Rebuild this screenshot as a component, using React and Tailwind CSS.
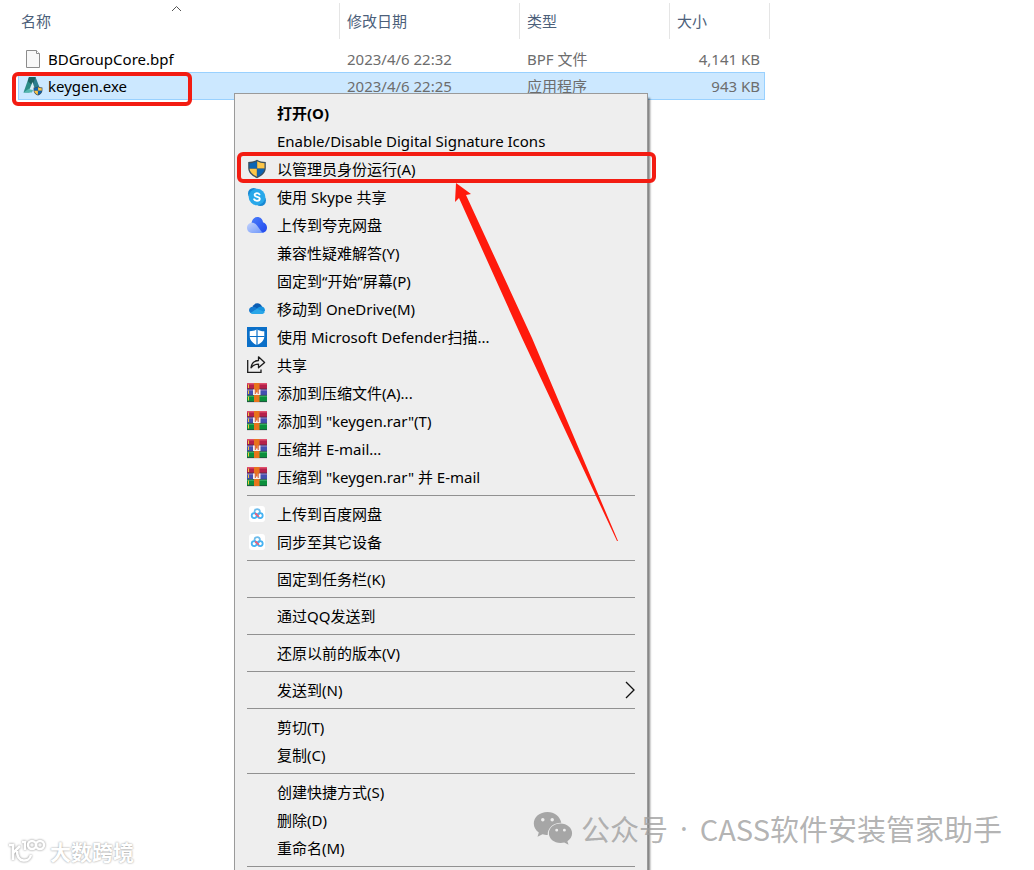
const FILES = [
  { name: 'BDGroupCore.bpf', date: '2023/4/6 22:32', type: 'BPF 文件', size: '4,141 KB', icon: PageIcon },
  { name: 'keygen.exe', date: '2023/4/6 22:25', type: '应用程序', size: '943 KB', icon: KeygenIcon, selected: true },
]

const MENU = [
  [
    { label: '打开(O)', bold: true },
    { label: 'Enable/Disable Digital Signature Icons' },
    { label: '以管理员身份运行(A)', icon: AdminShieldIcon },
    { label: '使用 Skype 共享', icon: SkypeIcon },
    { label: '上传到夸克网盘', icon: QuarkIcon },
    { label: '兼容性疑难解答(Y)' },
    { label: '固定到“开始”屏幕(P)' },
    { label: '移动到 OneDrive(M)', icon: OneDriveIcon },
    { label: '使用 Microsoft Defender扫描...', icon: DefenderIcon },
    { label: '共享', icon: ShareIcon },
    { label: '添加到压缩文件(A)...', icon: RarIcon },
    { label: '添加到 "keygen.rar"(T)', icon: RarIcon },
    { label: '压缩并 E-mail...', icon: RarIcon },
    { label: '压缩到 "keygen.rar" 并 E-mail', icon: RarIcon },
  ],
  [
    { label: '上传到百度网盘', icon: BaiduIcon },
    { label: '同步至其它设备', icon: BaiduIcon },
  ],
  [{ label: '固定到任务栏(K)' }],
  [{ label: '通过QQ发送到' }],
  [{ label: '还原以前的版本(V)' }],
  [{ label: '发送到(N)', submenu: true }],
  [{ label: '剪切(T)' }, { label: '复制(C)' }],
  [{ label: '创建快捷方式(S)' }, { label: '删除(D)' }, { label: '重命名(M)' }],
]

function PageIcon() {
  return (
    <svg width="20" height="20" viewBox="0 0 20 20" fill="none">
      <path d="M3.5 1.5h10l3 3v14h-13z" fill="#f8f8f8" stroke="#8c8c8c" />
      <path d="M13.5 1.5v3h3" stroke="#8c8c8c" fill="#fff" />
    </svg>
  )
}

function ShieldQuarters() {
  return (
    <>
      <path d="M10 0.8C7.600 2.300 4.500 3 1.200 3.100V9c0 4.600 3.800 8 8.800 10.200C15 17 18.800 13.600 18.800 9V3.100C15.500 3 12.400 2.300 10 .8z" fill="#3c4f5c" />
      <path d="M9.800 2.300C7.700 3.500 5.200 4.100 2.500 4.300v5.200h7.300z" fill="#0b64b4" />
      <path d="M10.200 2.300c2.100 1.200 4.600 1.800 7.300 2v5.200h-7.300z" fill="#fdc648" />
      <path d="M2.500 9.700h7.300v8C5.800 15.800 2.900 13 2.500 9.700z" fill="#fdc648" />
      <path d="M17.500 9.700h-7.300v8c4-1.900 6.900-4.700 7.300-8z" fill="#0b64b4" />
    </>
  )
}

function KeygenIcon() {
  return (
    <svg width="20" height="20" viewBox="0 0 20 20">
      <path d="M0.500 16.500 6 1h6.500L6.500 16.500z" fill="#2a8c86" />
      <path d="M6.500 1h6l6 15.500h-6z" fill="#2c7d8e" />
      <path d="M6 1 4.800 5.200 9.500 9.500 12.500 1z" fill="#1d6262" />
      <path d="M0.500 16.500 6 12.500l4 1.500-1 2.500z" fill="#55b8b0" />
      <path d="M9.500 6 6.500 13.500h5.500z" fill="#d9eef6" />
      <g transform="translate(10 10) scale(.5)"><ShieldQuarters /></g>
    </svg>
  )
}

function AdminShieldIcon() {
  return <svg width="20" height="20" viewBox="0 0 20 20"><ShieldQuarters /></svg>
}

function SkypeIcon() {
  return (
    <svg width="20" height="20" viewBox="0 0 20 20">
      <circle cx="6.500" cy="6.500" r="5.500" fill="#1787d2" />
      <circle cx="13.500" cy="13.500" r="5.500" fill="#1787d2" />
      <circle cx="10" cy="10" r="8.300" fill="#28a8ea" />
      <path d="M12.500 7.400C12 6.600 11.200 6.200 10 6.200c-1.400 0-2.400.7-2.400 1.700 0 2.600 5.200 1.200 5.200 3.900 0 1.200-1.200 2-2.800 2-1.300 0-2.300-.5-2.900-1.500" fill="none" stroke="#fff" strokeWidth="1.800" strokeLinecap="round" />
    </svg>
  )
}

function QuarkIcon() {
  return (
    <svg width="20" height="20" viewBox="0 0 20 20">
      <defs>
        <linearGradient id="quarkBack" x1="0" y1="0" x2="1" y2="1">
          <stop offset="0" stopColor="#4a7dfb" />
          <stop offset="1" stopColor="#2148ec" />
        </linearGradient>
        <linearGradient id="quarkFront" x1="0" y1="0" x2="1" y2="1">
          <stop offset="0" stopColor="#c3d2fb" />
          <stop offset="1" stopColor="#6c96fb" />
        </linearGradient>
      </defs>
      <path d="M4.500 8C5 4.500 7.200 2 10.300 2c3.200 0 5.300 2.200 5.700 5.200 2.400.8 4 2.900 4 5.300 0 3.200-2.300 5.500-5.500 5.500L4 13z" fill="url(#quarkBack)" />
      <path d="M0 12.800C0 9.900 2.200 7.700 5 7.700c2.400 0 3.700 1.200 5 2.800l3.500 4.800c.8 1.200 2 2.400 3.500 2.700H5c-2.900 0-5-2.300-5-5.200z" fill="url(#quarkFront)" />
    </svg>
  )
}

function OneDriveIcon() {
  return (
    <svg width="20" height="20" viewBox="0 0 20 20">
      <path d="M5 9.500C5.600 6.300 7.700 4.300 10.300 4.300c2.300 0 4.100 1.500 4.900 3.700L12 13z" fill="#0a5db4" />
      <path d="M6 14.500c-2.300 0-4-1.300-4-3.300 0-2.100 1.700-3.500 3.700-3.500 1.600 0 2.600.7 4 1.500L16 14z" fill="#1479d0" />
      <path d="M9.500 10c1.400-1.500 3.200-2.700 5.300-2.400 2 .3 3.200 1.900 3.200 3.800L16.500 14z" fill="#1793df" />
      <path d="M3.500 14 10 9.700l7.700 3.200c-.5 1.300-1.700 2.100-3.200 2.100H6c-1 0-1.800-.3-2.500-1z" fill="#29a6e8" />
    </svg>
  )
}

function DefenderIcon() {
  return (
    <svg width="20" height="20" viewBox="0 0 20 20">
      <path d="M0 0h20v20H0z" fill="#0a6fc8" />
      <path d="M10 2.200c2 1.400 4.500 2 7.300 2.100v4.900c0 4-3 6.900-7.300 8.900-4.300-2-7.300-4.900-7.300-8.900V4.300C5.500 4.200 8 3.600 10 2.200z" fill="#fff" />
      <path d="M10 2v16M2.500 9.500h15" stroke="#0a6fc8" strokeWidth="1.200" />
    </svg>
  )
}

function ShareIcon() {
  return (
    <svg width="20" height="20" viewBox="0 0 20 20" fill="none" stroke="#1c1c1c" strokeWidth="1.300">
      <path d="M.7 5v12.400h13.300v-3" />
      <path d="M4 12.800c.6-4.600 3-7.100 7.500-7.300V1.800L17.600 7.400l-6.100 5.400V9.100c-3.300 0-5.600 1-7.500 3.700z" strokeLinejoin="round" />
    </svg>
  )
}

function RarIcon() {
  return (
    <svg width="20" height="20" viewBox="0 0 20 20">
      <path d="M0 0h20v6.500H0z" fill="#b5204a" />
      <path d="M0 0h20v1.500H0z" fill="#e0506c" />
      <path d="M0 6.500h20v6H0z" fill="#4350b0" />
      <path d="M0 6.500h20v1.200H0z" fill="#8a78c8" />
      <path d="M0 12.500h20V19H0z" fill="#0b8f3c" />
      <path d="M0 12.500h20v1.200H0z" fill="#3fbb6c" />
      <path d="M0 6h20M0 12.300h20M0 18.700h20" stroke="#2d2a3c" strokeWidth=".6" />
      <path d="M1.500 1.500v3.500M1.500 7.500v3.500M1.500 13.500v4" stroke="#f0c83c" strokeWidth="1" />
      <path d="M7 0h5.500v19H7z" fill="#e8741c" />
      <path d="M6 6.500h7.500v5.500H6z" fill="#f6efe9" />
      <path d="M8.300 6v5M11.200 6v5" stroke="#c8402a" strokeWidth=".9" />
      <path d="M8.700 5h2v4.500h-2z" fill="#e8741c" />
    </svg>
  )
}

function BaiduIcon() {
  return (
    <svg width="20" height="20" viewBox="0 0 20 20" fill="none" strokeWidth="1.800">
      <rect x="2" y="2" width="16" height="16" rx="3" fill="#fff" />
      <circle cx="10.200" cy="7.800" r="2.700" stroke="#6cbcec" />
      <circle cx="7.200" cy="11.600" r="2.500" stroke="#45b2f2" />
      <circle cx="13.200" cy="11.600" r="2.500" stroke="#45b2f2" />
      <path d="M8 9.600c1.500 0 2.500 1.600 3.800 3.400" stroke="#ef5f78" />
    </svg>
  )
}

function WechatIcon() {
  return (
    <svg width="40" height="34" viewBox="0 0 40 34">
      <path fillRule="evenodd" d="M14.500 1C6.700 1 .8 6 .8 12.600c0 3.700 1.900 6.900 5 9l-1.300 4.200 5-2.500c1.700.5 3.200.7 5.200.7-.4-6.800 5.800-12.400 13.600-12.200C27.100 5.500 21.500 1 14.500 1zM9.800 7.100a1.700 1.700 0 1 1 0 3.500 1.700 1.700 0 0 1 0-3.500zm9.400 0a1.700 1.700 0 1 1 0 3.500 1.700 1.700 0 0 1 0-3.500z" fill="#a6a6a6" />
      <path fillRule="evenodd" d="M27.500 12.500c-6.600 0-11.600 4.400-11.600 9.800s5 9.800 11.600 9.800c1.400 0 2.600-.2 3.800-.5l4.200 2.100-1.100-3.500c2.900-1.800 4.700-4.700 4.700-7.900 0-5.400-5-9.800-11.600-9.800zm-3.800 5.200a1.400 1.400 0 1 1 0 2.900 1.400 1.400 0 0 1 0-2.900zm7.700 0a1.400 1.400 0 1 1 0 2.900 1.400 1.400 0 0 1 0-2.900z" fill="#a6a6a6" />
    </svg>
  )
}

function FileTable() {
  return (
    <table className="ml-[18px] table-fixed border-separate border-spacing-0 text-left">
      <colgroup>
        <col className="w-[322px]" />
        <col className="w-[180px]" />
        <col className="w-[150px]" />
        <col className="w-[95px]" />
        <col className="w-[5px]" />
      </colgroup>
      <thead className="text-[#4c607a]">
        <tr className="h-9">
          <th className="relative border-r border-[#e5e5e5] pl-[3px] font-normal">
            名称
            <svg className="absolute top-0.5 left-[153px]" width="11" height="7" viewBox="0 0 11 7" fill="none" stroke="#555">
              <path d="M1 6l4.500-4.500L10 6" />
            </svg>
          </th>
          <th className="border-r border-[#e5e5e5] pl-[7px] font-normal">修改日期</th>
          <th className="border-r border-[#e5e5e5] pl-[7px] font-normal">类型</th>
          <th colSpan={2} className="border-r border-[#e5e5e5] pl-[7px] font-normal">大小</th>
        </tr>
      </thead>
      <tbody className="text-[#6d6d6d]">
        <tr className="h-1.5"><td /></tr>
        {FILES.map(({ icon: Icon, ...file }) => {
          const cell = file.selected ? 'border-y border-[#99d1ff] bg-[#cce8ff]' : 'border-y border-transparent'
          return (
            <tr key={file.name} className={file.selected ? 'h-7' : 'h-[27px]'}>
              <td className={`${cell} border-l pl-1`}>
                <span className="flex items-center gap-[5px] text-black">
                  <Icon />
                  {file.name}
                </span>
              </td>
              <td className={`${cell} pl-[7px]`}>{file.date}</td>
              <td className={`${cell} pl-[7px]`}>{file.type}</td>
              <td className={`${cell} border-r pr-1 text-right`}>{file.size}</td>
            </tr>
          )
        })}
      </tbody>
    </table>
  )
}

function MenuItem({ label, icon: Icon, bold, submenu }) {
  return (
    <button
      type="button"
      role="menuitem"
      className={`flex h-7 w-full items-center gap-2.5 px-3 text-left ${bold ? 'font-bold' : ''}`}
    >
      <span className="w-5 shrink-0">{Icon && <Icon />}</span>
      <span className="flex-1">{label}</span>
      {submenu && (
        <svg width="10" height="18" viewBox="0 0 10 18" fill="none" stroke="#111" strokeWidth="1.300">
          <path d="M1 1l8 8-8 8" />
        </svg>
      )}
    </button>
  )
}

function ContextMenu() {
  return (
    <div
      role="menu"
      className="absolute top-[93px] left-[234px] w-[414px] border border-b-0 border-[#9a9a9a] bg-[#eeeeee] pt-[5px] text-black shadow-[2px_5px_2px_rgba(0,0,0,0.5)]"
    >
      {MENU.map(group => (
        <div key={group[0].label}>
          {group.map(item => <MenuItem key={item.label} {...item} />)}
          <hr className="mx-3 my-1 border-[#919191]" />
        </div>
      ))}
    </div>
  )
}

export default function App() {
  return (
    <div className="relative h-screen overflow-hidden bg-white pt-[3px] font-['Noto_Sans','Noto_Sans_CJK_SC',sans-serif] text-[15px] leading-5">
      <FileTable />
      <ContextMenu />

      {/* red marks over the file and the menu entry */}
      <div className="pointer-events-none absolute top-[72px] left-[12px] h-[34px] w-[180px] rounded-md border-4 border-[#f31c12]" />
      <div className="pointer-events-none absolute top-[152px] left-[237px] h-[31px] w-[419px] rounded-md border-4 border-[#f31c12]" />
      <svg className="pointer-events-none absolute top-[183px] left-[454px]" width="166" height="360" viewBox="0 0 166 360">
        <path d="M2 0l15 11-5 1L78 155l86 203-1 0L68 155 5 15 1 19z" fill="#ff1a0c" />
      </svg>

      <div className="absolute right-8 bottom-6 flex items-center gap-2 text-[#9f9f9f]/80">
        <WechatIcon />
        <div className="flex gap-3 font-['Noto_Sans_CJK_SC',sans-serif] text-[29px] leading-9 whitespace-nowrap">
          <span>公众号</span>
          <span className="font-['Noto_Sans',sans-serif]">·</span>
          <span>CASS软件安装管家助手</span>
        </div>
      </div>

      <div className="absolute bottom-1.5 left-2 flex items-center gap-1 text-white">
        <svg className="drop-shadow-[0_0_1px_#888]" width="38" height="26" viewBox="0 0 38 26" fill="none" stroke="#fff" strokeWidth="2.500">
          <path d="M1 7h4v15" />
          <path d="M5 15l7-7M9 13c0 12 12 12 14 4" />
          <path d="M14 4h3v8" />
          <circle cx="24" cy="7" r="4" />
          <circle cx="32" cy="7" r="4" />
        </svg>
        <span className="font-['Noto_Sans_CJK_SC',sans-serif] text-[21px] leading-6 font-bold [text-shadow:0_0_2px_#888]">大数跨境</span>
      </div>
    </div>
  )
}
